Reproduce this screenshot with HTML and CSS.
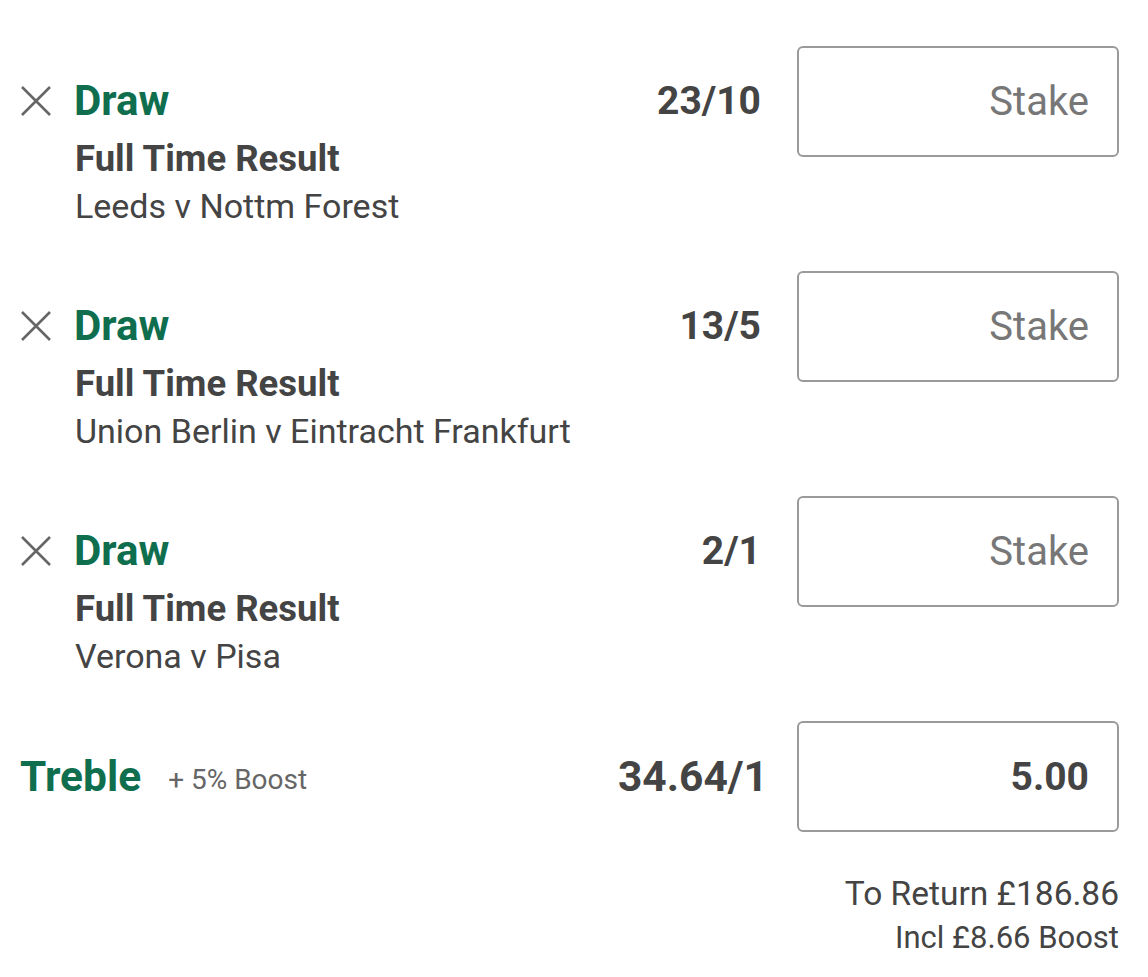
FILE: index.html
```html
<!DOCTYPE html>
<html lang="en">
<head>
<meta charset="utf-8">
<title>Bet slip</title>
<link rel="stylesheet" href="styles.css">
</head>
<body>
<div class="slip">
  <div class="sel">
    <div class="info">
      <div class="title">
        <svg class="remove" viewBox="0 0 32 32" aria-hidden="true"><path d="M2 2 L30 30 M30 2 L2 30"/></svg>
        <span class="pick">Draw</span>
      </div>
      <div class="market">Full Time Result</div>
      <div class="match">Leeds v Nottm Forest</div>
    </div>
    <div class="odds">23/10</div>
    <div class="stake"><span class="ph">Stake</span></div>
  </div>

  <div class="sel">
    <div class="info">
      <div class="title">
        <svg class="remove" viewBox="0 0 32 32" aria-hidden="true"><path d="M2 2 L30 30 M30 2 L2 30"/></svg>
        <span class="pick">Draw</span>
      </div>
      <div class="market">Full Time Result</div>
      <div class="match">Union Berlin v Eintracht Frankfurt</div>
    </div>
    <div class="odds">13/5</div>
    <div class="stake"><span class="ph">Stake</span></div>
  </div>

  <div class="sel">
    <div class="info">
      <div class="title">
        <svg class="remove" viewBox="0 0 32 32" aria-hidden="true"><path d="M2 2 L30 30 M30 2 L2 30"/></svg>
        <span class="pick">Draw</span>
      </div>
      <div class="market">Full Time Result</div>
      <div class="match">Verona v Pisa</div>
    </div>
    <div class="odds">2/1</div>
    <div class="stake"><span class="ph">Stake</span></div>
  </div>

  <div class="multi">
    <div class="multi-info">
      <span class="multi-name">Treble</span>
      <span class="boost">+ 5% Boost</span>
    </div>
    <div class="odds big">34.64/1</div>
    <div class="stake"><span class="val">5.00</span></div>
  </div>

  <div class="returns">
    <div class="ret-line main">To Return £186.86</div>
    <div class="ret-line">Incl £8.66 Boost</div>
  </div>
</div>
</body>
</html>
```

FILE: styles.css
```css
html, body {
  margin: 0;
  padding: 0;
  background: #ffffff;
}

body {
  font-family: Roboto, "Noto Sans", "Liberation Sans", sans-serif;
  color: #444444;
}

.slip {
  padding: 46px 29px 0 20px;
}

.sel {
  display: flex;
  align-items: flex-start;
  height: 225px;
}

.info {
  flex: 1;
  padding-top: 31px;
}

.title {
  display: flex;
  align-items: center;
  height: 48px;
}

.remove {
  width: 32px;
  height: 32px;
  margin-right: 22px;
  flex: none;
}

.remove path {
  stroke: #666666;
  stroke-width: 2.6;
  fill: none;
}

.pick {
  font-size: 42px;
  line-height: 48px;
  font-weight: 700;
  color: #0f6e4e;
}

.market {
  margin-top: 12px;
  padding-left: 55px;
  font-size: 36.5px;
  line-height: 44px;
  font-weight: 700;
  color: #444444;
}

.match {
  margin-top: 3px;
  padding-left: 55px;
  font-size: 34px;
  line-height: 44px;
  color: #444444;
}

.odds {
  padding-top: 33px;
  margin-right: 36px;
  font-size: 39px;
  line-height: 44px;
  font-weight: 700;
  color: #444444;
}

.odds.big {
  padding-top: 0;
  margin-right: 29px;
  font-size: 42.5px;
}

.stake {
  box-sizing: border-box;
  width: 322px;
  height: 111px;
  border: 2px solid #9a9a9a;
  border-radius: 6px;
  display: flex;
  align-items: center;
  justify-content: flex-end;
  padding-right: 28px;
  flex: none;
}

.ph {
  font-size: 40px;
  color: #777777;
}

.val {
  font-size: 39px;
  font-weight: 700;
  color: #444444;
}

.multi {
  display: flex;
  align-items: center;
  height: 111px;
}

.multi-info {
  flex: 1;
  display: flex;
  align-items: center;
}

.multi-name {
  font-size: 42.5px;
  font-weight: 700;
  color: #0f6e4e;
}

.boost {
  margin-left: 27px;
  margin-top: 5px;
  font-size: 28px;
  color: #666666;
}

.returns {
  margin-top: 40px;
  text-align: right;
}

.ret-line {
  font-size: 31px;
  line-height: 44px;
  color: #444444;
}

.ret-line.main {
  font-size: 33.5px;
}
```
